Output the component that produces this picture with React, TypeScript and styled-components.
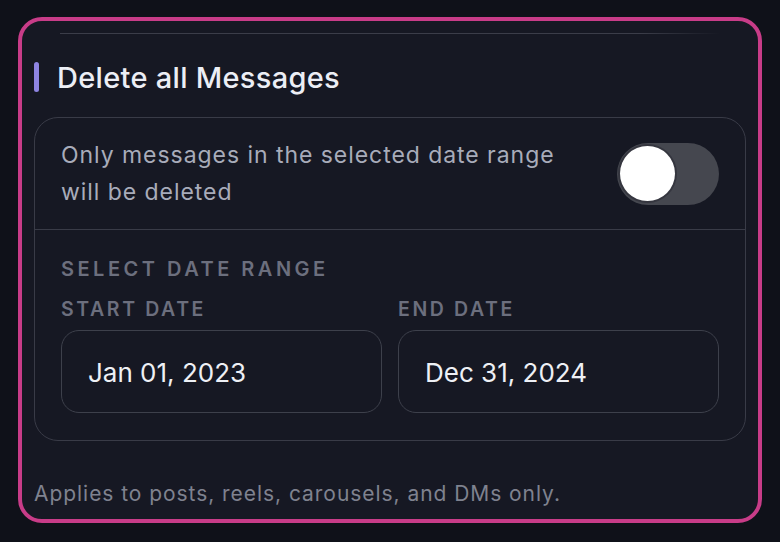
import React, {useState} from 'react';
import styled, {createGlobalStyle} from 'styled-components';

const GlobalStyle = createGlobalStyle`
  html, body {
    margin: 0;
    padding: 0;
    background: #0f1119;
  }
  body {
    font-family: Inter, "Noto Sans", "Liberation Sans", sans-serif;
    -webkit-font-smoothing: antialiased;
  }
  * {
    box-sizing: border-box;
  }
`;

export default function App() {
  const [onlyRange, setOnlyRange] = useState(false);

  return (
    <>
      <GlobalStyle />
      <Frame>
        <TopRule />
        <Header>
          <AccentBar />
          <Heading1>Delete all Messages</Heading1>
        </Header>

        <Card>
          <ToggleRow>
            <RowText>Only messages in the selected date range will be deleted</RowText>
            <Switch
              type="button"
              aria-pressed={onlyRange}
              $on={onlyRange}
              onClick={() => setOnlyRange(v => !v)}
            >
              <Knob $on={onlyRange} />
            </Switch>
          </ToggleRow>

          <RangeSection>
            <SectionLabel>Select date range</SectionLabel>
            <DateGrid>
              <DateField>
                <FieldLabel>Start date</FieldLabel>
                <DateBox>Jan 01, 2023</DateBox>
              </DateField>
              <DateField>
                <FieldLabel>End date</FieldLabel>
                <DateBox>Dec 31, 2024</DateBox>
              </DateField>
            </DateGrid>
          </RangeSection>
        </Card>

        <Footnote>Applies to posts, reels, carousels, and DMs only.</Footnote>
      </Frame>
    </>
  );
}

const Frame = styled.div`
  margin: 17px 18px;
  height: 506px;
  padding: 0 12px;
  border: 4px solid #c83c88;
  border-radius: 24px;
  background: #161823;
  display: flex;
  flex-direction: column;
`;

const TopRule = styled.div`
  height: 1px;
  margin: 12px 26px 0;
  background: linear-gradient(to right, #3b3d49 0%, #3b3d49 88%, rgba(59, 61, 73, 0) 100%);
`;

const Header = styled.div`
  display: flex;
  align-items: center;
  gap: 18px;
  margin-top: 28px;
  height: 30px;
`;

const AccentBar = styled.span`
  width: 5px;
  height: 30px;
  border-radius: 3px;
  background: #8e84e2;
`;

const Heading1 = styled.h1`
  margin: 0;
  padding-top: 2px;
  font-size: 29px;
  line-height: 30px;
  font-weight: 500;
  letter-spacing: 0.3px;
  color: #eceef5;
`;

const Card = styled.div`
  margin-top: 25px;
  border: 1px solid #393b47;
  border-radius: 24px;
`;

const ToggleRow = styled.div`
  display: flex;
  align-items: center;
  justify-content: space-between;
  padding: 19px 26px;
  border-bottom: 1px solid #393b47;
`;

const RowText = styled.p`
  margin: 0;
  max-width: 510px;
  font-size: 23px;
  line-height: 36.5px;
  letter-spacing: 0.95px;
  color: #a8acba;
`;

const Switch = styled.button<{$on: boolean}>`
  position: relative;
  flex: none;
  width: 102px;
  height: 62px;
  padding: 0;
  border: none;
  border-radius: 31px;
  background: ${p => (p.$on ? '#8e84e2' : '#45474f')};
  cursor: pointer;
`;

const Knob = styled.span<{$on: boolean}>`
  position: absolute;
  top: 3.5px;
  left: ${p => (p.$on ? '44px' : '3px')};
  width: 55px;
  height: 55px;
  border-radius: 50%;
  background: #ffffff;
  box-shadow: 0 0 0 2px rgba(22, 24, 35, 0.35);
`;

const RangeSection = styled.div`
  padding: 27px 26px 27px;
`;

const SectionLabel = styled.div`
  font-size: 20px;
  line-height: 24px;
  font-weight: 600;
  letter-spacing: 3.5px;
  text-transform: uppercase;
  color: #6c6f7e;
`;

const DateGrid = styled.div`
  display: grid;
  grid-template-columns: 1fr 1fr;
  gap: 16px;
  margin-top: 16px;
`;

const DateField = styled.div`
  display: flex;
  flex-direction: column;
  gap: 9px;
`;

const FieldLabel = styled.div`
  font-size: 19.5px;
  line-height: 24px;
  font-weight: 600;
  letter-spacing: 2.6px;
  text-transform: uppercase;
  color: #6c6f7e;
`;

const DateBox = styled.div`
  display: flex;
  align-items: center;
  height: 83px;
  padding: 2px 26px 0;
  border: 1px solid #3d404b;
  border-radius: 18px;
  font-size: 26px;
  color: #eef0f5;
`;

const Footnote = styled.p`
  margin: 41px 0 0;
  font-size: 21px;
  line-height: 24px;
  letter-spacing: 0.95px;
  color: #7f828f;
`;
